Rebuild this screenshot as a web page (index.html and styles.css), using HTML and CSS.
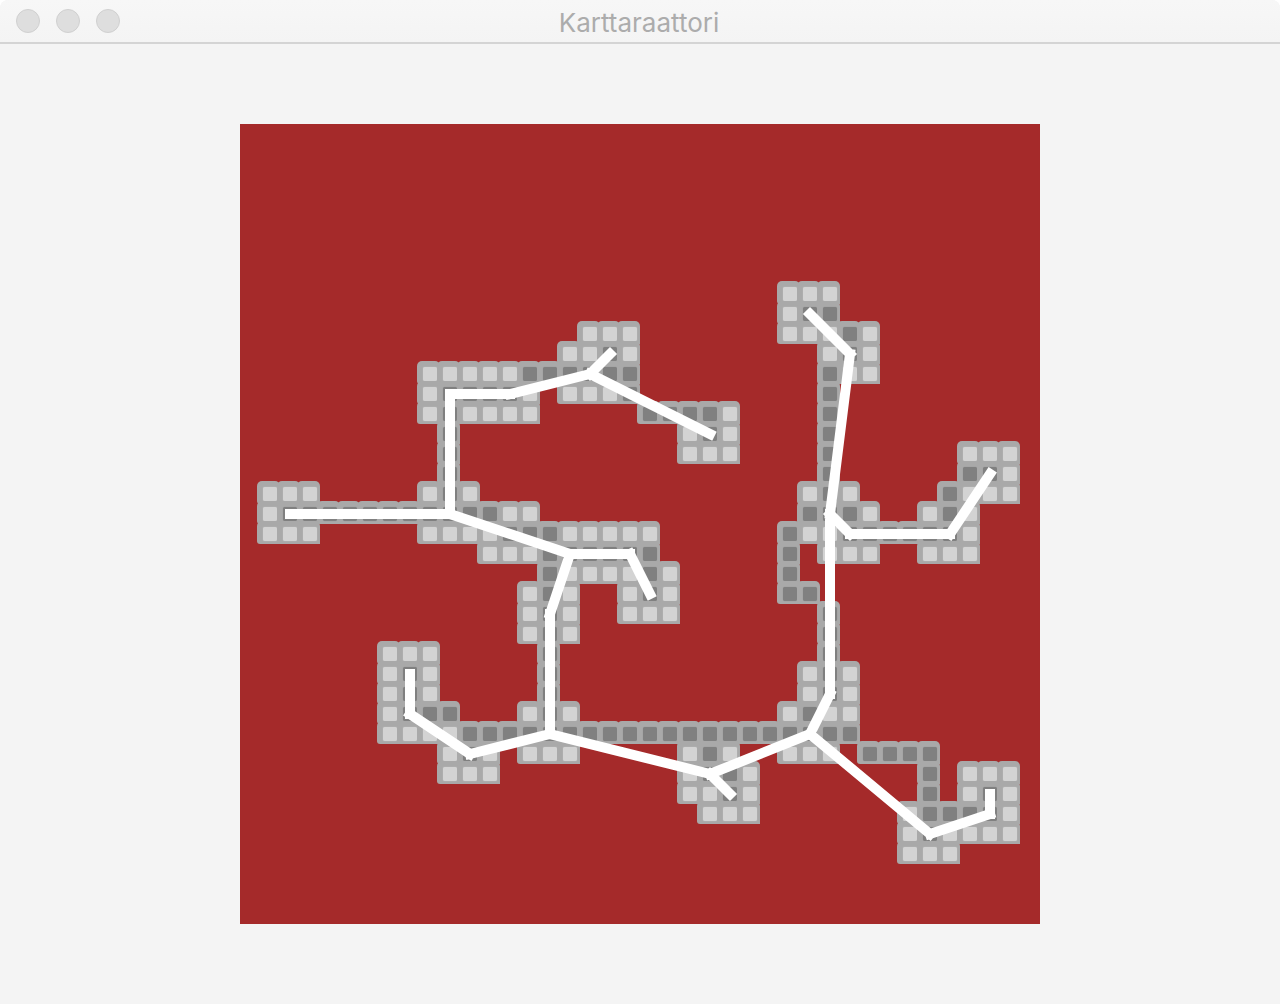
FILE: index.html
```html
<!DOCTYPE html>
<html lang="fi">
<head>
  <meta charset="UTF-8">
  <meta name="viewport" content="width=device-width, initial-scale=1.0">
  <title>Karttaraattori</title>
  <link rel="stylesheet" href="styles.css">
</head>
<body>

<header class="titlebar">
  <div class="lights">
    <span class="light-btn"></span>
    <span class="light-btn"></span>
    <span class="light-btn"></span>
  </div>
  <div class="title">Karttaraattori</div>
</header>

<main class="content">
  <div class="map" id="map">
    <!-- Tiet ruutujen paalla -->
    <svg class="roads" width="800" height="800" viewBox="240 124 800 800">
      <path d="M290 514L450 514M450 514L450 394M450 394L510 394M510 394L590 374M590 374L610 354M590 374L710 434"/>
      <path d="M450 514L570 554M570 554L630 554M630 554L650 594M570 554L550 614M550 614L550 734"/>
      <path d="M550 734L470 754M470 754L410 714M410 714L410 674"/>
      <path d="M550 734L710 774M710 774L730 794M710 774L810 734"/>
      <path d="M810 734L830 694M830 694L830 514M830 514L850 354M850 354L810 314"/>
      <path d="M830 514L850 534M850 534L950 534M950 534L990 474"/>
      <path d="M810 734L930 834M930 834L990 814M990 814L990 794"/>
    </svg>
  </div>
</main>

<script src="map.js"></script>
</body>
</html>
```

FILE: styles.css
```css
* {
  box-sizing: border-box;
}
html {
  background: #fff;
}
body {
  margin: 0;
  height: 1004px;
  overflow: hidden;
  background: #f4f4f4;
  border-radius: 8px 8px 0 0;
  font-family: Inter, "Noto Sans", sans-serif;
}
.titlebar {
  display: flex;
  align-items: center;
  position: relative;
  height: 44px;
  padding-left: 16px;
  background: linear-gradient(#f7f7f7, #f4f4f4);
  border-bottom: 2px solid #d4d4d4;
  border-radius: 8px 8px 0 0;
}
.lights {
  display: flex;
  gap: 16px;
}
.light-btn {
  width: 24px;
  height: 24px;
  border-radius: 50%;
  background: #dedede;
  border: 1px solid #d0d0d0;
}
.title {
  position: absolute;
  left: 0;
  right: 2px;
  top: 8px;
  text-align: center;
  font-size: 26px;
  line-height: 30px;
  color: #acacac;
}
.content {
  display: flex;
  justify-content: center;
  padding-top: 80px;
}
.map {
  position: relative;
  display: grid;
  grid-template-columns: repeat(40, 20px);
  grid-template-rows: repeat(40, 20px);
  width: 800px;
  height: 800px;
  background: #a52a2a;
}
.tile {
  margin: -3px 0 0 -3px;
  padding: 6px 3px 3px 6px;
  background: #a9a9a9;
  border-radius: 5px 5px 0 3px;
}
.tile span {
  display: block;
  width: 14px;
  height: 14px;
  border-radius: 2px;
}
.tile .l {
  background: #d3d3d3;
  box-shadow: 0 0 1px #d3d3d3;
}
.tile .d {
  background: #808080;
  box-shadow: 0 0 1px #808080;
}
.roads {
  position: absolute;
  left: 0;
  top: 0;
}
.roads path {
  fill: none;
  stroke: #fff;
  stroke-width: 10;
  stroke-linecap: square;
}
```

FILE: map.js
```js
// l = vaalea ruutu, d = tumma ruutu, rivit alkavat rivilta 8
const rivit = [
  "...........................lll",
  "...........................ldd",
  ".................lll.......llldl",
  "................lldl.........ldl",
  ".........llllldddddd.........dll",
  ".........lddddl.llld.........d",
  ".........ldllll.....ddddl....d",
  "..........d...........ldl....d",
  "..........d...........lll....d......lll",
  "..........d..................d......ddl",
  ".lll.....ldl................ldl....dlll",
  ".ldddddddddddll.............dddl..ldl",
  ".lll.....lllldddlllll......dllddddddl",
  "............llldddddd......d.lll..lll",
  "...............dlllldl.....d",
  "..............ldl..ldl.....dd",
  "..............ldl..lll.......d",
  "..............ldl............d",
  ".......lll.....d.............d",
  ".......ldl.....d............ldl",
  ".......ldl.....d............ldl",
  ".......lddd...ldl..........ldll",
  ".......lllldddddddddddddddddddd",
  "..........ldl.lll.....ldl..lll.dddd",
  "..........lll.........lddl........d.lll",
  "......................lldl........d.ldl",
  ".......................lll.......lddddl",
  ".................................ldllll",
  ".................................lll"
];

const kartta = document.getElementById('map');
const tiet = kartta.querySelector('.roads');

rivit.forEach((rivi, r) => {
  [...rivi].forEach((merkki, c) => {
    if (merkki === '.') return;
    const ruutu = document.createElement('div');
    ruutu.className = 'tile';
    ruutu.style.gridArea = (r + 9) + ' / ' + (c + 1);
    const sisa = document.createElement('span');
    sisa.className = merkki;
    ruutu.appendChild(sisa);
    kartta.insertBefore(ruutu, tiet);
  });
});
```
